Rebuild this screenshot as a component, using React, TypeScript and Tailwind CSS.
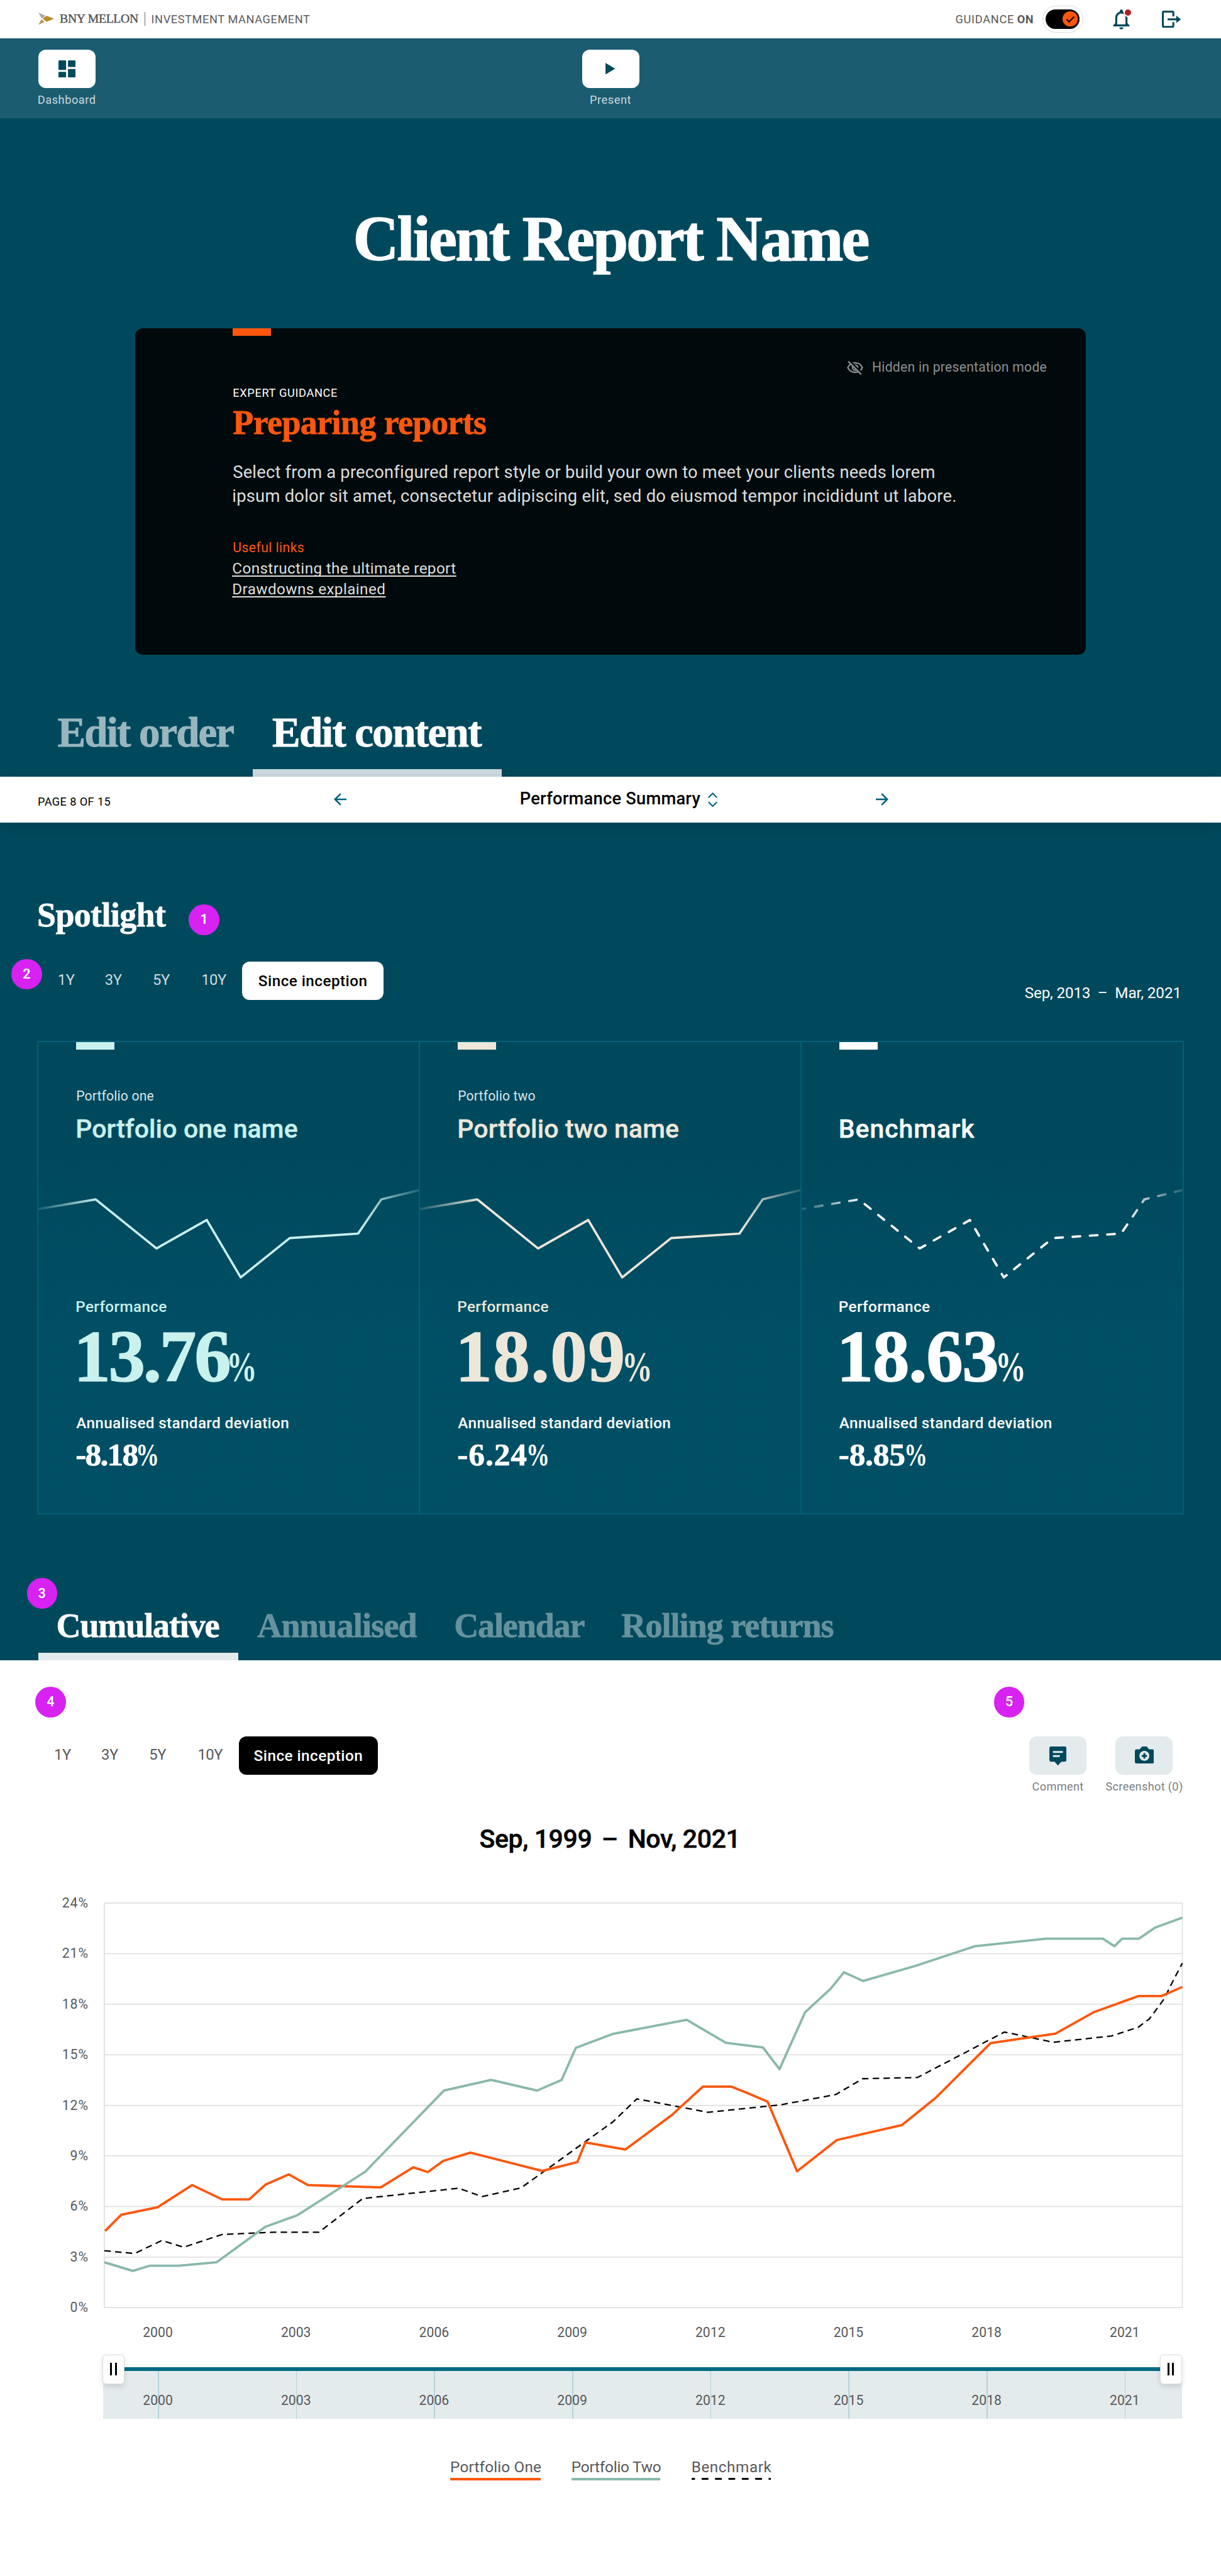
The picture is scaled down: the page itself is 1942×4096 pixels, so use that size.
import React from "react";
import { MdNotificationsNone, MdOutlineVisibilityOff } from "react-icons/md";

const serif = "font-['Liberation_Serif',serif] font-bold [-webkit-text-stroke:0.014em_currentColor]";

function Badge({ n, className }: { n: number; className: string }) {
  return (
    <div
      className={`absolute z-20 flex h-[48.5px] w-[48.5px] items-center justify-center rounded-full bg-[#d722f2] text-[21.5px] font-semibold text-white ${className}`}
    >
      {n}
    </div>
  );
}

function BrandMark() {
  return (
    <svg className="h-[19.6px] w-[25px]" viewBox="0 0 33 26">
      <path d="M0 0 15 6.6 7.5 12.6Z" fill="#a6a8ab" />
      <path d="M0 26 6.2 14 13.2 19.8Z" fill="#b79c63" />
      <path d="M8.6 13 17.4 6.6 33 13 17.4 19.6Z" fill="#bb8b2b" />
    </svg>
  );
}

function Header() {
  return (
    <header className="flex h-[60.7px] items-center justify-between bg-white pr-[63.8px] pl-[60.7px]">
      <div className="-mt-px flex items-center">
        <BrandMark />
        <span className="ml-[9.4px] w-[126px] font-['Liberation_Serif',serif] text-[19.7px] tracking-[-0.29px] whitespace-nowrap text-[#4f5052] [-webkit-text-stroke:0.4px_#4f5052]">
          BNY MELLON
        </span>
        <span className="ml-[9px] h-[22px] w-px bg-[#6d6e70]" />
        <span className="mt-[2px] ml-[9.5px] text-[18.2px] tracking-[0.58px] whitespace-nowrap text-[#5c5d60]">
          INVESTMENT MANAGEMENT
        </span>
      </div>
      <div className="flex items-center">
        <span className="mr-[4.6px] text-[18.2px] tracking-[0.73px] text-[#58595b]">GUIDANCE</span>
        <span className="mr-[13.6px] text-[18.2px] font-bold tracking-[0.4px] text-[#58595b]">ON</span>
        <div className="flex h-[42.5px] w-[65.2px] items-center justify-center rounded-full border border-[#dcdcdc] bg-white">
          <div className="flex h-[30.4px] w-[54.6px] items-center justify-end rounded-full bg-black pr-[3px]">
            <svg className="h-[24.3px] w-[24.3px]" viewBox="0 0 32 32">
              <circle cx="16" cy="16" r="16" fill="#fc570d" />
              <path d="M8.5 16.5 13.6 22 24.5 11" fill="none" stroke="#000" strokeWidth="2.6" />
            </svg>
          </div>
        </div>
        <div className="relative ml-[47.8px] flex h-[39px] w-[28px] items-center justify-center">
          <MdNotificationsNone className="-ml-[2px] h-[39px] w-[39px] shrink-0 text-[#00495d]" />
          <span className="absolute top-[2.5px] right-[-2px] h-[14px] w-[14px] rounded-full border-2 border-white bg-[#b71c1c]" />
        </div>
        <svg className="ml-[49.4px] h-[27.3px] w-[30.3px]" viewBox="0 0 40 36">
          <path
            d="M24 12V4a2 2 0 0 0-2-2H4a2 2 0 0 0-2 2v28a2 2 0 0 0 2 2h18a2 2 0 0 0 2-2v-8M12 18h20"
            fill="none"
            stroke="#00495d"
            strokeWidth="4"
          />
          <path d="M30 10.2 40 18 30 25.8Z" fill="#00495d" />
        </svg>
      </div>
    </header>
  );
}

function ToolButton({ label, children }: { label: string; children: React.ReactNode }) {
  return (
    <div className="flex w-[91px] flex-col items-center">
      <button className="flex h-[60.7px] w-[91px] items-center justify-center rounded-[12px] bg-white">{children}</button>
      <span className="mt-[7.6px] text-[18.2px] leading-[24px] tracking-[0.55px] text-[#ccd9dd]">{label}</span>
    </div>
  );
}

function Toolbar() {
  return (
    <div className="grid h-[127.4px] grid-cols-3 bg-[#1c5c70] px-[60.7px] pt-[18.2px]">
      <ToolButton label="Dashboard">
        <svg className="h-[27.3px] w-[27.3px]" viewBox="0 0 36 36" fill="#00495d">
          <rect width="16" height="20" rx="1.6" />
          <rect y="24" width="16" height="12" rx="1.6" />
          <rect x="20" width="16" height="14" rx="1.6" />
          <rect x="20" y="18" width="16" height="18" rx="1.6" />
        </svg>
      </ToolButton>
      <div className="flex justify-center">
        <ToolButton label="Present">
          <svg className="h-[18.4px] w-[15.4px]" viewBox="0 0 20 24" fill="#00495d">
            <path d="M0 0 20 12 0 24Z" />
          </svg>
        </ToolButton>
      </div>
    </div>
  );
}

function GuidanceCard() {
  return (
    <div className="mx-auto mt-[92px] h-[518.9px] w-[1511.1px] rounded-[12px] bg-[#00090b] pl-[154.8px]">
      <div className="h-[12.1px] w-[60.7px] bg-[#fc570d]" />
      <div className="mt-[36.4px] flex h-[28px] items-center justify-end gap-[13px] pr-[61.5px] text-[#8b9192]">
        <MdOutlineVisibilityOff className="mt-[2px] h-[28px] w-[28px]" />
        <span className="text-[21.2px] leading-[28px] tracking-[0.23px]">Hidden in presentation mode</span>
      </div>
      <div className="mt-[14.6px] text-[18.2px] leading-[24px] tracking-[0.66px] text-white">EXPERT GUIDANCE</div>
      <h2 className={`mt-[4.7px] text-[54px] leading-[60px] tracking-[-0.6px] text-[#fc570d] ${serif}`}>
        Preparing reports
      </h2>
      <p className="mt-[30.1px] text-[27.3px] leading-[38px] text-[#dcdfdf]">
        <span className="block tracking-[0.21px] whitespace-nowrap">
          Select from a preconfigured report style or build your own to meet your clients needs lorem
        </span>
        <span className="-ml-px block tracking-[0.27px] whitespace-nowrap">
          ipsum dolor sit amet, consectetur adipiscing elit, sed do eiusmod tempor incididunt ut labore.
        </span>
      </p>
      <div className="mt-[49.5px] text-[21.2px] leading-[28px] tracking-[0.41px] text-[#fc570d]">Useful links</div>
      <div className="mt-[1.5px] -ml-px flex flex-col items-start text-[24.3px] leading-[33.4px] text-[#dcdfdf] underline decoration-[1.5px] underline-offset-[3px] [text-decoration-skip-ink:none]">
        <a className="tracking-[0.36px]">Constructing the ultimate report</a>
        <a className="tracking-[0.39px]">Drawdowns explained</a>
      </div>
    </div>
  );
}

function EditTabs() {
  return (
    <div className={`mt-[87.4px] flex h-[106.8px] px-[60.7px] text-[67px] leading-[72px] ${serif}`}>
      <div className="w-[341.3px] pl-[30.8px] tracking-[-2px] whitespace-nowrap text-[#99b6be]">Edit order</div>
      <div className="flex w-[396px] flex-col justify-between pl-[30.9px] tracking-[-1.65px] whitespace-nowrap text-white">
        <span>Edit content</span>
        <div className="-ml-[30.9px] h-[12.1px] bg-[#ccdadf]" />
      </div>
    </div>
  );
}

function PageNav() {
  return (
    <nav className="relative z-10 flex h-[72.8px] items-center bg-white pl-[60px] shadow-[0_6px_24px_rgba(0,0,0,0.12)]">
      <span className="w-[471.4px] pt-[6px] text-[18.2px] tracking-[0.39px] text-black">PAGE 8 OF 15</span>
      <svg className="h-[20px] w-[20px]" viewBox="0 0 26 26" fill="none" stroke="#006079" strokeWidth="3.4">
        <path d="M14 1.4 2.4 13 14 24.6M3 13H26" />
      </svg>
      <span className="-mt-[2px] ml-[275.4px] w-[299px] text-[27.3px] font-medium tracking-[0.22px] whitespace-nowrap text-black">
        Performance Summary
      </span>
      <svg className="h-[23.5px] w-[15.2px]" viewBox="0 0 20 31" fill="none" stroke="#006079" strokeWidth="2.8">
        <path d="M1 11 10 2 19 11M1 20 10 29 19 20" />
      </svg>
      <svg className="ml-[251.6px] h-[20px] w-[20px]" viewBox="0 0 26 26" fill="none" stroke="#006079" strokeWidth="3.4">
        <path d="M12 1.4 23.6 13 12 24.6M23 13H0" />
      </svg>
    </nav>
  );
}

function Ranges({ text, active }: { text: string; active: string }) {
  return (
    <div className={`flex h-[60.7px] items-center text-[23.8px] ${text}`}>
      <span className="w-[75px] pb-[2px] tracking-[-0.5px]">1Y</span>
      <span className="w-[76.2px] pb-[2px] tracking-[-0.4px]">3Y</span>
      <span className="w-[77.2px] pb-[2px] tracking-[-0.4px]">5Y</span>
      <span className="w-[65.2px] pb-[2px] tracking-[-0.5px]">10Y</span>
      <button
        className={`flex h-[60.7px] items-center justify-center rounded-[12px] pt-[2px] text-[24.3px] font-medium tracking-[0.45px] ${active}`}
      >
        Since inception
      </button>
    </div>
  );
}

type Portfolio = {
  id: string;
  label: string;
  name: string;
  nameTracking: string;
  color: string;
  text: string;
  bar: string;
  value: string;
  valueTracking: string;
  unitOffset: string;
  deviation: string;
  deviationTracking: string;
  dashed?: boolean;
};

const portfolios: Portfolio[] = [
  {
    id: "one",
    label: "Portfolio one",
    name: "Portfolio one name",
    nameTracking: "tracking-[0.13px]",
    color: "#c9f1ee",
    text: "text-[#c9f1ee]",
    bar: "bg-[#c9f1ee]",
    value: "13.76",
    valueTracking: "tracking-[-3.2px]",
    unitOffset: "-ml-[4px]",
    deviation: "-8.18",
    deviationTracking: "tracking-[-1.8px]",
  },
  {
    id: "two",
    label: "Portfolio two",
    name: "Portfolio two name",
    nameTracking: "tracking-[0.13px]",
    color: "#ede7da",
    text: "text-[#ede7da]",
    bar: "bg-[#ede7da]",
    value: "18.09",
    valueTracking: "tracking-[1.6px]",
    unitOffset: "-ml-[7px]",
    deviation: "-6.24",
    deviationTracking: "tracking-[0.9px]",
  },
  {
    id: "benchmark",
    label: "",
    name: "Benchmark",
    nameTracking: "tracking-[0.92px]",
    color: "#ffffff",
    text: "text-white",
    bar: "bg-white",
    value: "18.63",
    valueTracking: "tracking-[-1.3px]",
    unitOffset: "-ml-[5px]",
    deviation: "-8.85",
    deviationTracking: "tracking-[-0.3px]",
    dashed: true,
  },
];

function Sparkline({ id, color, dashed }: { id: string; color: string; dashed?: boolean }) {
  return (
    <svg className="mt-[61px] block h-[166.9px] w-full" viewBox="0 0 800 220" preserveAspectRatio="none">
      <defs>
        <linearGradient id={`fade-${id}`} gradientUnits="userSpaceOnUse" x1="0" y1="0" x2="800" y2="0">
          <stop offset="0" stopColor={color} stopOpacity="0.12" />
          <stop offset="0.16" stopColor={color} />
          <stop offset="0.84" stopColor={color} />
          <stop offset="1" stopColor={color} stopOpacity="0.15" />
        </linearGradient>
      </defs>
      <path
        d="M0 56 120.2 35.7 247.9 138.5 353.2 79 424.5 199.3 527.3 116.9 670.7 107.4 719.6 35.7 800 16.1"
        fill="none"
        stroke={`url(#fade-${id})`}
        strokeWidth="4.8"
        strokeLinejoin="round"
        strokeLinecap={dashed ? "round" : "butt"}
        strokeDasharray={dashed ? "16 20.4" : undefined}
        strokeDashoffset={dashed ? 8 : undefined}
      />
    </svg>
  );
}

function PortfolioColumn({ p, divider }: { p: Portfolio; divider: boolean }) {
  return (
    <div className={divider ? "-ml-[1.5px] border-l-2 border-[#006078]" : ""}>
      <div className="pl-[60px]">
        <div className={`h-[12.1px] w-[60.7px] ${p.bar}`} />
        <div className="mt-[60.2px] h-[28px] text-[21.2px] leading-[28px] tracking-[0.12px] text-[#d9e4e7]">{p.label}</div>
        <h3
          className={`mt-[13.7px] -ml-px text-[41px] leading-[48px] font-medium whitespace-nowrap [-webkit-text-stroke:0.4px_currentColor] ${p.text} ${p.nameTracking}`}
        >
          {p.name}
        </h3>
      </div>
      <Sparkline id={p.id} color={p.color} dashed={p.dashed} />
      <div className="pl-[60px]">
        <div className={`mt-[17.2px] -ml-px text-[24.3px] leading-[28px] font-medium tracking-[0.36px] ${p.text}`}>Performance</div>
        <div className={`mt-[8.1px] -ml-[4px] flex h-[114px] items-baseline text-[117px] leading-[114px] ${serif} ${p.text}`}>
          <span className={p.valueTracking}>{p.value}</span>
          <span className={`inline-block origin-left scale-x-[0.72] text-[68px] [-webkit-text-stroke:0px] ${p.unitOffset}`}>%</span>
        </div>
        <div className="mt-[34.2px] text-[24.3px] leading-[28px] font-medium tracking-[0.35px] whitespace-nowrap text-white">
          Annualised standard deviation
        </div>
        <div className={`mt-[8.9px] -ml-px flex items-baseline text-[51.5px] leading-[56px] text-white ${serif}`}>
          <span className={p.deviationTracking}>{p.deviation}</span>
          <span className="-ml-[2px] inline-block origin-left scale-x-[0.72] [-webkit-text-stroke:0px]">%</span>
        </div>
      </div>
    </div>
  );
}

function Spotlight() {
  return (
    <section className="relative pt-[117.2px]">
      <Badge n={1} className="top-[130.5px] left-[300.4px]" />
      <Badge n={2} className="top-[217px] left-[18.2px]" />
      <h2 className={`ml-[59px] text-[54px] leading-[60px] tracking-[-0.65px] text-white ${serif}`}>Spotlight</h2>
      <div className="mt-[44.4px] flex items-end justify-between pr-[63px] pl-[91.8px]">
        <Ranges text="text-[#ccdadf]" active="w-[224.6px] bg-white text-black" />
        <div className="-mb-[2.6px] flex gap-[11.5px] text-[24.3px] leading-[28px] text-white">
          <span className="tracking-[-0.2px]">Sep, 2013</span>
          <span>–</span>
          <span className="tracking-[-0.1px]">Mar, 2021</span>
        </div>
      </div>
      <div className="mt-[65.2px] ml-[59.2px] grid h-[752.5px] w-[1823.7px] grid-cols-3 border-2 border-[#006078] bg-linear-to-b from-[#00495d] from-25% to-[#004f65] to-60%">
        {portfolios.map((p, i) => (
          <PortfolioColumn key={p.id} p={p} divider={i > 0} />
        ))}
      </div>
    </section>
  );
}

function ReportTabs() {
  return (
    <div className={`relative mt-[146.8px] flex h-[85.4px] pl-[60.7px] text-[54px] leading-[60px] text-[#66929e] ${serif}`}>
      <Badge n={3} className="top-[-45.2px] left-[42.5px] font-['Roboto',sans-serif] leading-none [-webkit-text-stroke:0px]" />
      <div className="flex w-[318.6px] flex-col justify-between pl-[28.8px] tracking-[-1.1px] text-white">
        <span>Cumulative</span>
        <div className="-ml-[28.8px] h-[12.1px] bg-[#e3ebec]" />
      </div>
      <div className="w-[312.9px] pl-[30px] tracking-[-0.75px]">Annualised</div>
      <div className="w-[266.2px] pl-[30px] tracking-[-1.1px]">Calendar</div>
      <div className="pl-[30px] tracking-[-0.95px]">Rolling returns</div>
    </div>
  );
}

function ActionButton({ label, width, children }: { label: string; width: string; children: React.ReactNode }) {
  return (
    <div className={`flex flex-col items-center ${width}`}>
      <button className="flex h-[60.7px] w-[91px] items-center justify-center rounded-[12px] bg-[#e3ebec]">{children}</button>
      <span className="mt-[7.6px] text-[18.2px] leading-[24px] tracking-[0.32px] whitespace-nowrap text-[#7c7d7f]">{label}</span>
    </div>
  );
}

const years = ["2000", "2003", "2006", "2009", "2012", "2015", "2018", "2021"];
const percents = ["24%", "21%", "18%", "15%", "12%", "9%", "6%", "3%", "0%"];

const orangeLine =
  "1.6,687.3 35.4,653.3 111.7,637.5 184,591.1 246.7,621 303.8,621 337.5,590.3 386.5,568.7 426.7,591.1 579.4,596.1 647.7,553.8 678.2,563.8 710.4,540.5 767.4,523.1 917.7,561.3 991.6,543 1008.5,501.6 1092.3,516.5 1189.6,444.4 1254.7,384.7 1314.1,384.7 1347.1,397.9 1390.5,416.2 1452.3,562.1 1535.9,496.6 1672.5,465.1 1742.4,408.7 1858.1,293.5 1994,273.6 2075.9,228 2168.4,194.8 2216.6,194.8 2260,175.8";
const greenLine =
  "0,752.8 59.5,771 94.8,760.2 155.9,760.2 235.5,752.8 336.7,679 405,654.1 547.2,562.9 712,393 810.8,370.6 907.3,393 958.7,370.6 988.4,303.4 1065.3,274.4 1220.9,244.6 1302.9,292.7 1380.8,302.6 1415.4,348.2 1469.2,228.8 1523.1,179.1 1550.4,145.1 1590.6,163.3 1699.9,131.8 1825.2,90.4 1973.9,74.6 2093.6,74.6 2117.7,90.4 2133.8,74.6 2169.2,74.6 2202.9,51.4 2260,30.7";
const benchmarkLine =
  "0,728.7 63.5,734.5 120.5,707.2 166.3,721.3 246.7,694.7 355.2,689.8 450,689.8 541.6,619.3 742.5,597.7 792.3,615.2 873.5,596.9 917.7,565.4 1008.5,499.9 1066,458.8 1116.4,410.4 1265.9,438.6 1418.6,422.8 1533.5,401.3 1589.8,368.1 1704.7,365.6 1887.1,270.3 1989.9,291.8 2111.3,278.6 2167.5,260.3 2190.8,242.9 2221.4,201.5 2243,158.4 2260,126";

function PerformanceChart() {
  return (
    <div className="mt-[63.6px] flex pl-[60.7px] text-[#58595b]">
      <div className="flex h-[671.3px] w-[80.3px] flex-col justify-between text-right text-[21.2px] leading-[28px] tracking-[1px]">
        {percents.map((v) => (
          <span key={v}>{v}</span>
        ))}
      </div>
      <svg className="mt-[14px] ml-[25.1px] h-[643.3px] w-[1714.5px] overflow-visible" viewBox="0 0 2260 848" fill="none">
        <g stroke="#dcdcdc" strokeWidth="2">
          {percents.map((v, i) => (
            <path key={v} d={`M0 ${i * 106}H2260`} />
          ))}
          <path d="M0 0V848M2260 0V848" />
        </g>
        <g strokeLinejoin="round">
          <polyline points={benchmarkLine} stroke="#000" strokeWidth="3" strokeDasharray="13.5 9" strokeLinecap="butt" />
          <polyline points={orangeLine} stroke="#fc570d" strokeWidth="5" />
          <polyline points={greenLine} stroke="#8ab8ac" strokeWidth="5" />
        </g>
      </svg>
    </div>
  );
}

function Handle({ className }: { className: string }) {
  return (
    <div
      className={`absolute top-[-20.5px] flex h-[47px] w-[35.4px] items-center justify-center gap-[4.5px] rounded-[6px] border border-[#dcdcdc] bg-white shadow-[0_4px_10px_rgba(0,0,0,0.12)] ${className}`}
    >
      <span className="h-[19.7px] w-[3px] bg-black" />
      <span className="h-[19.7px] w-[3px] bg-black" />
    </div>
  );
}

function RangeSlider() {
  return (
    <div className="relative mt-[41.5px] ml-[163.9px] w-[1716px] text-[21.2px] leading-[28px] text-[#58595b]">
      <div className="h-[6px] bg-[#006a85]" />
      <div className="h-[75.9px] bg-[#e3ebec]">
        <div className="-ml-[22.7px] flex h-full w-[1757.6px]">
          {years.map((y) => (
            <div key={y} className="relative flex w-[219.7px] justify-center pt-[33.4px]">
              <span className="absolute top-0 left-1/2 h-full w-[1.5px] bg-[#b5d3da]" />
              <span className="relative">{y}</span>
            </div>
          ))}
        </div>
      </div>
      <Handle className="left-[-1px]" />
      <Handle className="right-0" />
    </div>
  );
}

function Legend() {
  return (
    <div className="mt-[63.4px] flex pl-[716.1px] text-[24.3px] leading-[28px] text-[#58595b]">
      <div className="w-[144.4px]">
        <div className="tracking-[0.16px] whitespace-nowrap">Portfolio One</div>
        <div className="mt-[2.7px] h-[4px] bg-[#fc570d]" />
      </div>
      <div className="ml-[48.3px] w-[141px]">
        <div className="tracking-[-0.2px] whitespace-nowrap">Portfolio Two</div>
        <div className="mt-[2.7px] h-[4px] bg-[#8ab8ac]" />
      </div>
      <div className="ml-[49.9px] w-[126.2px]">
        <div className="tracking-[0.57px] whitespace-nowrap">Benchmark</div>
        <svg className="mt-[2.7px] block h-[4px] w-full" viewBox="0 0 126.2 4" fill="none">
          <path d="M0 1.6H126.2" stroke="#000" strokeWidth="3" strokeDasharray="10.7 10.6" strokeDashoffset="5.3" />
        </svg>
      </div>
    </div>
  );
}

function Report() {
  return (
    <section className="relative grow bg-white pt-[121.3px]">
      <Badge n={4} className="top-[42.4px] left-[56.1px]" />
      <Badge n={5} className="top-[42.4px] left-[1580.9px]" />
      <div className="flex justify-between pr-[61.7px] pl-[86.1px]">
        <Ranges text="text-[#58595b]" active="w-[221.5px] bg-black text-white" />
        <div className="flex gap-[31.6px]">
          <ActionButton label="Comment" width="w-[91px]">
            <svg className="mt-[1px] h-[30.3px] w-[27.3px]" viewBox="0 0 36 40">
              <path d="M4 0H32a4 4 0 0 1 4 4V28a4 4 0 0 1-4 4H25L18 40 11 32H4a4 4 0 0 1-4-4V4a4 4 0 0 1 4-4Z" fill="#00495d" />
              <path d="M7.5 11.5H28.5M7.5 20H22" stroke="#e3ebec" strokeWidth="4" />
            </svg>
          </ActionButton>
          <ActionButton label="Screenshot (0)" width="w-[120.7px]">
            <svg className="-mt-[2px] h-[27.3px] w-[30.3px]" viewBox="0 0 40 36">
              <path
                d="M4 6H10L14 1.2A3 3 0 0 1 16.3 0H23.7A3 3 0 0 1 26 1.2L30 6H36a4 4 0 0 1 4 4V32a4 4 0 0 1-4 4H4a4 4 0 0 1-4-4V10a4 4 0 0 1 4-4Z"
                fill="#00495d"
              />
              <circle cx="20" cy="19.7" r="10.4" fill="#e3ebec" />
              <path d="M20 14V25.4M14.3 19.7H25.7" stroke="#00495d" strokeWidth="4" />
            </svg>
          </ActionButton>
        </div>
      </div>
      <h2 className="mt-[46.9px] flex justify-center gap-[15.5px] pr-[2px] text-[41px] leading-[48px] font-medium text-black [-webkit-text-stroke:0.5px_currentColor]">
        <span className="tracking-[-0.4px]">Sep, 1999</span>
        <span>–</span>
        <span className="tracking-[-0.4px]">Nov, 2021</span>
      </h2>
      <PerformanceChart />
      <div className="mt-[11.3px] ml-[141.2px] flex text-[21.2px] leading-[28px] text-[#58595b]">
        {years.map((y) => (
          <span key={y} className="w-[219.7px] text-center">
            {y}
          </span>
        ))}
      </div>
      <RangeSlider />
      <Legend />
    </section>
  );
}

export default function App() {
  return (
    <div className="flex h-[4096px] w-[1942px] flex-col overflow-hidden bg-[#00495d] font-['Roboto',sans-serif]">
      <Header />
      <Toolbar />
      <h1 className={`pt-[141.8px] text-center text-[101px] leading-[100px] tracking-[-2.8px] text-white ${serif}`}>
        Client Report Name
      </h1>
      <GuidanceCard />
      <EditTabs />
      <PageNav />
      <Spotlight />
      <ReportTabs />
      <Report />
    </div>
  );
}
